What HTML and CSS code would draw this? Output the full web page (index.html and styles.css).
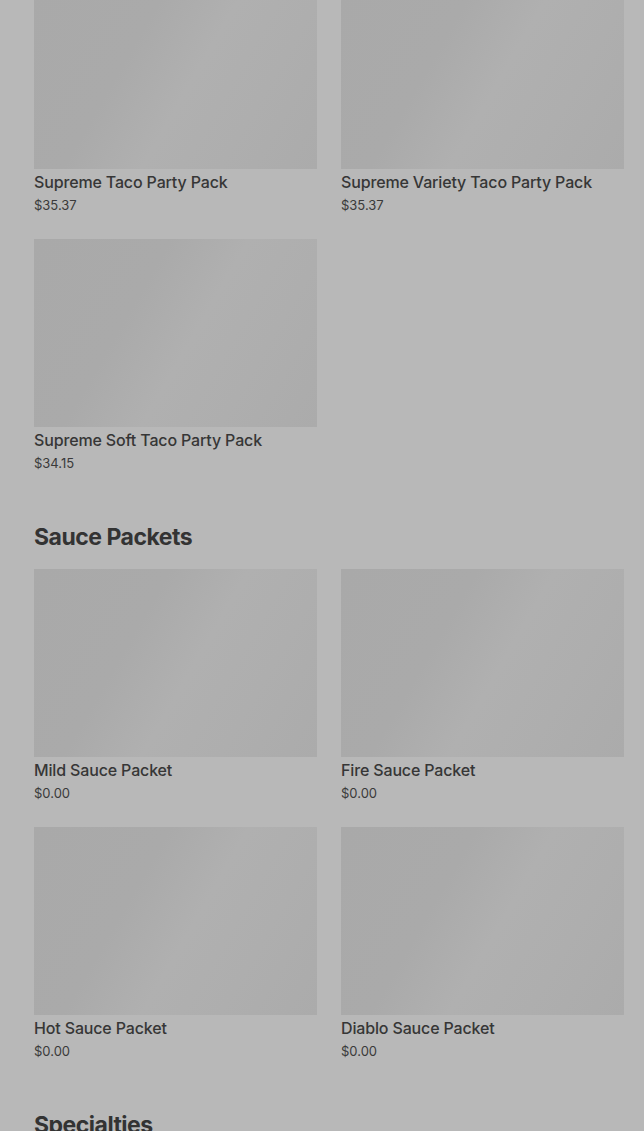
FILE: index.html
```html
<!DOCTYPE html>
<html lang="en">
<head>
<meta charset="utf-8">
<title>Menu</title>
<link rel="stylesheet" href="styles.css">
</head>
<body>
<main class="menu">
  <section class="section section-first">
    <div class="grid">
      <div class="card">
        <div class="thumb"></div>
        <div class="name">Supreme Taco Party Pack</div>
        <div class="price">$35.37</div>
      </div>
      <div class="card">
        <div class="thumb"></div>
        <div class="name">Supreme Variety Taco Party Pack</div>
        <div class="price">$35.37</div>
      </div>
      <div class="card">
        <div class="thumb"></div>
        <div class="name">Supreme Soft Taco Party Pack</div>
        <div class="price">$34.15</div>
      </div>
    </div>
  </section>
  <section class="section">
    <h2 class="heading">Sauce Packets</h2>
    <div class="grid">
      <div class="card">
        <div class="thumb"></div>
        <div class="name">Mild Sauce Packet</div>
        <div class="price">$0.00</div>
      </div>
      <div class="card">
        <div class="thumb"></div>
        <div class="name">Fire Sauce Packet</div>
        <div class="price">$0.00</div>
      </div>
      <div class="card">
        <div class="thumb"></div>
        <div class="name">Hot Sauce Packet</div>
        <div class="price">$0.00</div>
      </div>
      <div class="card">
        <div class="thumb"></div>
        <div class="name">Diablo Sauce Packet</div>
        <div class="price">$0.00</div>
      </div>
    </div>
  </section>
  <section class="section">
    <h2 class="heading">Specialties</h2>
  </section>
</main>
</body>
</html>
```
FILE: styles.css
```css
html, body {
  margin: 0;
  padding: 0;
  background: #b8b8b8;
  overflow: hidden;
}
body {
  font-family: Inter, "Noto Sans", Arial, sans-serif;
  color: #353535;
}
.menu {
  margin-top: -19px;
  padding: 0 20px 0 34px;
  display: flex;
  flex-direction: column;
  gap: 49px;
}
.grid {
  display: grid;
  grid-template-columns: 1fr 1fr;
  column-gap: 24px;
  row-gap: 25px;
}
.card {
  display: flex;
  flex-direction: column;
}
.thumb {
  height: 188px;
  background: linear-gradient(120deg, #a9a9a9 0%, #aaaaaa 35%, #b0b0b0 55%, #aeaeae 75%, #ababab 100%);
}
.name {
  margin-top: 3px;
  font-size: 16px;
  line-height: 20px;
  font-weight: 500;
  color: #363636;
  letter-spacing: -0.15px;
}
.price {
  margin-top: 4px;
  font-size: 13px;
  line-height: 18px;
  font-weight: 400;
  color: #3a3a3a;
}
.heading {
  margin: 0 0 16px;
  font-size: 23px;
  line-height: 32px;
  font-weight: 700;
  color: #333333;
  letter-spacing: -0.5px;
}
```
